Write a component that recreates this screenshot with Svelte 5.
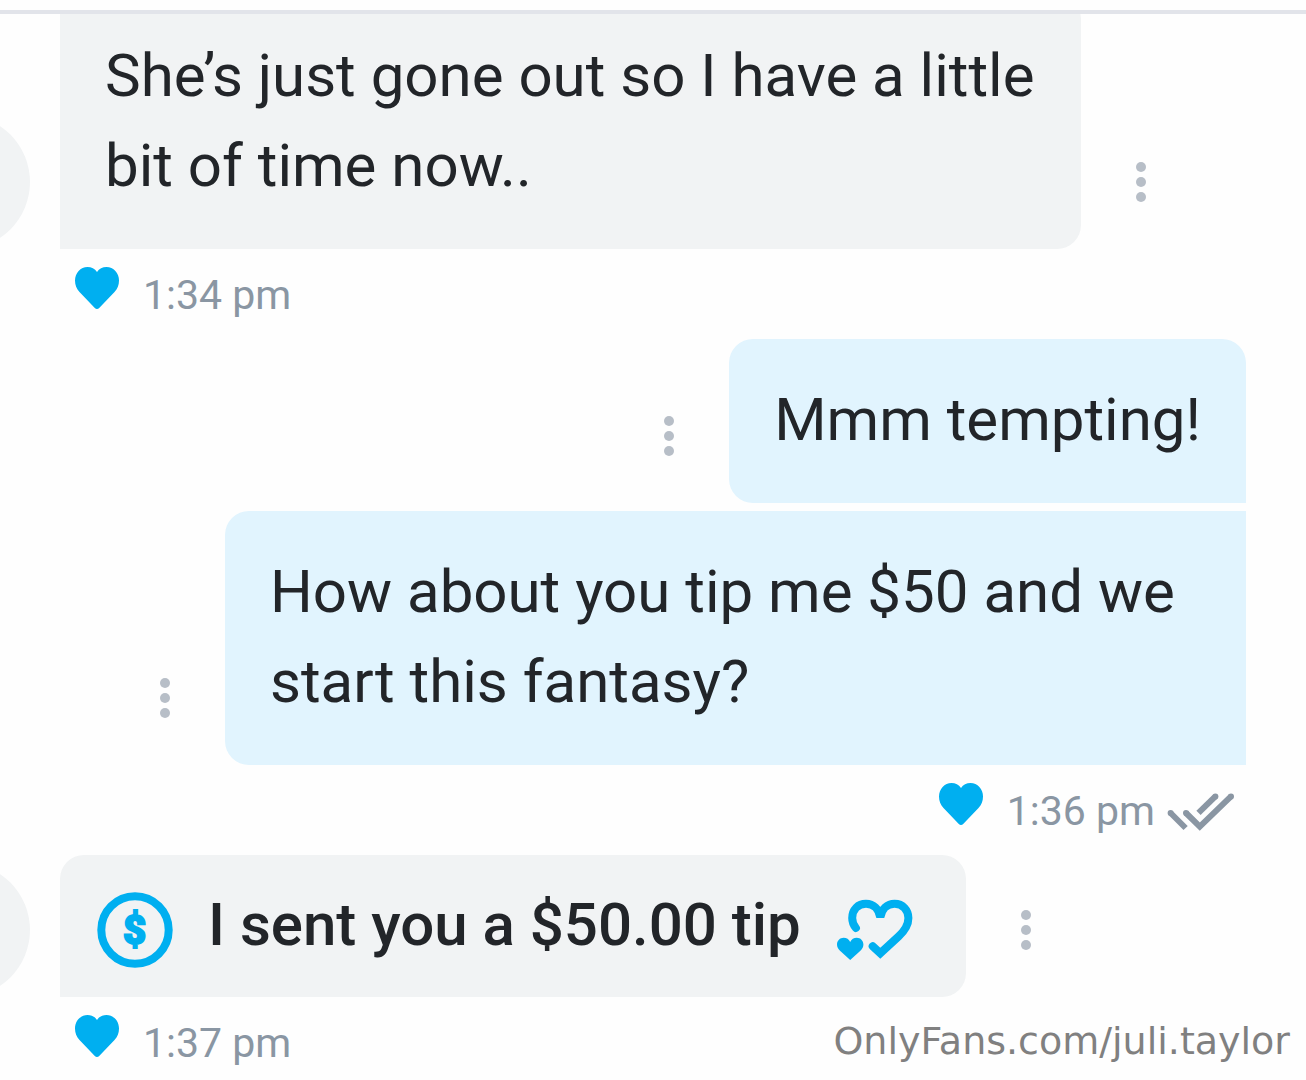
<script>
  const messages = [
    {
      text: "She’s just gone out so I have a little bit of time now..",
      time: "1:34 pm",
      first: false,
    },
    { text: "Mmm tempting!", mine: true, first: true },
    {
      text: "How about you tip me $50 and we start this fantasy?",
      mine: true,
      time: "1:36 pm",
      first: false,
    },
    { text: "I sent you a $50.00 tip", tip: true, time: "1:37 pm", first: true },
  ];
</script>

<main>
  <header></header>

  <section class="chat">
    {#each messages as message}
      <article class:mine={message.mine}>
        <div class="row">
          {#if !message.mine}
            <div class="avatar"></div>
          {/if}

          <div class="bubble" class:first={message.first} class:tip={message.tip}>
            {#if message.tip}
              <svg class="icon" viewBox="0 0 90 90" aria-hidden="true">
                <circle cx="45" cy="45" r="33.7" />
                <text x="44.5" y="59" text-anchor="middle">$</text>
              </svg>
            {/if}
            <p>{message.text}</p>
            {#if message.tip}
              <svg class="icon" viewBox="0 0 90 90" aria-hidden="true">
                <path
                  d="M26.9 43C24.4 40 23.2 37 23.2 33C23.2 24.5 29 18.8 37 18.8C44.5 18.8 49.8 24 51.3 32.3C52.8 24 58 18.8 65.6 18.8C73.8 18.8 79.4 25 79.4 33C79.4 41 75.5 46 69.5 51.5L51.3 68.2L43.7 61.2"
                />
                <path
                  class="solid"
                  d="M21.2 75L11 65.8C9 63.8 8 62 8 59.5C8 55.5 11 52.7 14.6 52.7C17.6 52.7 20 54.2 21.2 57C22.4 54.2 24.8 52.7 27.8 52.7C31.4 52.7 34.4 55.5 34.4 59.5C34.4 62 33.4 63.8 31.4 65.8Z"
                />
              </svg>
            {/if}
          </div>

          <button aria-label="Message options">
            <i></i>
            <i></i>
            <i></i>
          </button>
        </div>

        {#if message.time}
          <div class="meta">
            <svg class="heart" viewBox="0 0 44 42" aria-hidden="true">
              <path
                d="M22 42C21.2 42 20.4 41.6 19.8 41L4.5 25C1.5 21.8 0 18 0 13.5C0 6 5.5 0 12.5 0C16.5 0 19.8 1.6 22 5C24.2 1.6 27.5 0 31.5 0C38.5 0 44 6 44 13.5C44 18 42.5 21.8 39.5 25L24.2 41C23.6 41.6 22.8 42 22 42Z"
              />
            </svg>
            <time>{message.time}</time>
            {#if message.mine}
              <svg class="read" viewBox="0 0 68 40" aria-hidden="true">
                <path d="M3.6 20L18.6 35" />
                <path d="M31.5 19.8L48.4 3.4" />
                <path d="M19 20L32.8 33.6L64 3.4" />
                <g>
                  <circle cx="3.6" cy="20" r="3" />
                  <circle cx="48.4" cy="3.4" r="3" />
                  <circle cx="19" cy="20" r="3" />
                  <circle cx="64" cy="3.4" r="3" />
                </g>
              </svg>
            {/if}
          </div>
        {/if}
      </article>
    {/each}
  </section>

  <footer>OnlyFans.com/juli.taylor</footer>
</main>

<style>
  :global(body) {
    background: #fefefe;
  }

  main {
    position: relative;
    height: 100vh;
    overflow: hidden;
    display: flex;
    flex-direction: column;
    font-family: Roboto, "Liberation Sans", sans-serif;
    color: #222529;
  }

  header {
    position: relative;
    z-index: 1;
    flex: none;
    height: 10px;
    background: #fefefe;
    border-bottom: 4px solid #e2e4ea;
  }

  /* scrolled so that the first bubble starts behind the header */
  .chat {
    flex: none;
    margin-top: -19px;
    padding: 0 60px;
  }

  .row {
    display: flex;
    align-items: flex-end;
  }

  .mine .row {
    flex-direction: row-reverse;
  }

  .avatar {
    flex: none;
    width: 134px;
    height: 134px;
    margin-left: -164px;
    margin-right: 30px;
    border-radius: 50%;
    background: #f1f3f4;
  }

  .bubble {
    box-sizing: border-box;
    max-width: calc(100% - 165px);
    padding: 36px 45px 38px;
    border-radius: 0 24px 24px 0;
    background: #f1f3f4;
  }

  .bubble.first {
    border-radius: 24px 24px 24px 0;
  }

  .mine .bubble {
    margin-bottom: 8px;
    border-radius: 24px 0 0 24px;
    background: #e1f4fe;
  }

  .mine .bubble.first {
    border-radius: 24px 24px 0 24px;
  }

  p {
    margin: 0;
    font-size: 60px;
    line-height: 90px;
  }

  .bubble.tip {
    display: flex;
    align-items: flex-start;
    gap: 28px;
    padding: 25px 47px 22px 30px;
  }

  .tip p {
    font-weight: 500;
  }

  .icon {
    flex: none;
    width: 90px;
    height: 90px;
    margin-top: 5px;
    fill: none;
    stroke: #00aff0;
    stroke-width: 8;
    stroke-linecap: round;
  }

  .icon .solid {
    fill: #00aff0;
    stroke: none;
  }

  .icon text {
    fill: #00aff0;
    font-size: 40px;
    font-weight: 900;
    stroke-width: 2;
  }

  button {
    flex: none;
    display: flex;
    flex-direction: column;
    align-items: center;
    justify-content: center;
    gap: 5px;
    width: 120px;
    height: 134px;
    padding: 0;
    border: none;
    background: none;
    cursor: pointer;
  }

  .mine button {
    margin-bottom: 8px;
  }

  button i {
    width: 10px;
    height: 10px;
    border-radius: 50%;
    background: #b7bec7;
  }

  .meta {
    display: flex;
    align-items: flex-start;
    box-sizing: border-box;
    height: 90px;
    padding: 18px 15px 0;
    color: #8a96a3;
  }

  .mine .meta {
    justify-content: flex-end;
    height: 82px;
    padding: 10px 11px 0;
  }

  .heart {
    width: 44px;
    height: 42px;
    fill: #00aff0;
  }

  time {
    margin-left: 24px;
    font-size: 41px;
    line-height: 56px;
  }

  .read {
    width: 68px;
    height: 40px;
    margin: 10px 0 0 12px;
    fill: none;
    stroke: #8a96a3;
    stroke-width: 6;
  }

  .read g {
    fill: #8a96a3;
    stroke: none;
  }

  footer {
    position: absolute;
    right: 16px;
    bottom: 16px;
    font-family: "DejaVu Sans", sans-serif;
    font-size: 38px;
    line-height: 46px;
    color: #808080;
  }
</style>
